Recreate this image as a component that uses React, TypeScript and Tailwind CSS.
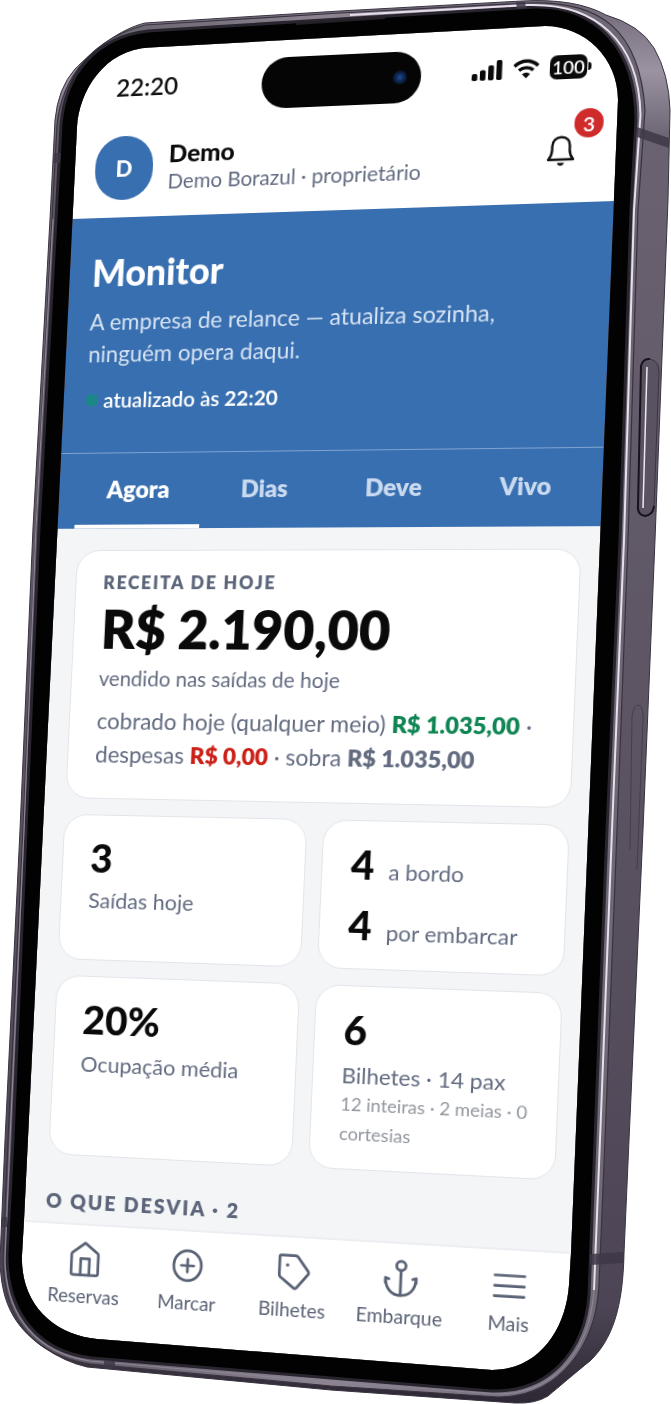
import type { ReactNode } from "react";

// Local size of the app screen, and the two rows that are pinned to the device
const SCREEN_W = 544;
const HEADER_BOTTOM = 172;
const NAV_TOP = 1198;

type Point = [number, number];

// top-left, top-right, bottom-right, bottom-left on the device
const CORNERS: Point[] = [[72, 219], [615, 201], [571, 1252], [24, 1220]];

// Projects the flat screen onto the tilted glass
function project([p0, p1, p2, p3]: Point[]) {
    const dx1 = p1[0] - p2[0], dx2 = p3[0] - p2[0], dx3 = p0[0] - p1[0] + p2[0] - p3[0];
    const dy1 = p1[1] - p2[1], dy2 = p3[1] - p2[1], dy3 = p0[1] - p1[1] + p2[1] - p3[1];
    const det = dx1 * dy2 - dx2 * dy1;
    const g = (dx3 * dy2 - dx2 * dy3) / det;
    const h = (dx1 * dy3 - dx3 * dy1) / det;
    const s = NAV_TOP - HEADER_BOTTOM;
    const k = HEADER_BOTTOM / s;
    const a = p1[0] - p0[0] + g * p1[0], b = p3[0] - p0[0] + h * p3[0];
    const d = p1[1] - p0[1] + g * p1[1], e = p3[1] - p0[1] + h * p3[1];
    return `matrix3d(${[
        a / SCREEN_W, d / SCREEN_W, 0, g / SCREEN_W,
        b / s, e / s, 0, h / s,
        0, 0, 1, 0,
        p0[0] - b * k, p0[1] - e * k, 0, 1 - h * k,
    ].join(",")})`;
}

/* ---------- Icons ---------- */

function NavIcon({ children }: { children: ReactNode }) {
    return (
        <svg viewBox="0 0 32 36" className="w-[34px] h-[38px]" fill="none" stroke="currentColor" strokeWidth="2.600"
            strokeLinecap="round" strokeLinejoin="round" aria-hidden="true">
            {children}
        </svg>
    );
}

const NAV = [
    {
        label: "Reservas",
        icon: <><path d="M3 31V13.500Q3 12.500 4 11.800L16 2.500 28 11.800Q29 12.500 29 13.500V31Q29 33 27 33H5Q3 33 3 31Z" /><path d="M12 33V17.500H20.500V33" /></>,
    },
    {
        label: "Marcar",
        icon: <><ellipse cx="16" cy="18" rx="13.200" ry="14" /><path d="M16 12V24M10 18H22" /></>,
    },
    {
        label: "Bilhetes",
        icon: <><path d="M3 4Q3 2.500 4.500 2.500H17.500Q19 2.500 20 3.500L30 16.500Q31 18 30 19.500L19.500 32.500Q18 34 16.500 32.500L4 23Q3 22 3 20.500Z" /><circle cx="10.500" cy="11.500" r="1" fill="currentColor" strokeWidth="1.200" /></>,
    },
    {
        label: "Embarque",
        icon: <><circle cx="16" cy="6" r="4.300" /><path d="M16 10.500V33.500M5 18.500 1.800 17.500 1.800 22M27 18 30.200 17 30.200 21.500M2 18.500C2 28 8.500 33.500 16 33.500S30 28 30 18" /></>,
    },
    { label: "Mais", icon: <path d="M2.500 9H29.500M2.500 18.500H29.500M2.500 28H29.500" /> },
];

function Bell() {
    return (
        <svg viewBox="0 0 28 32" className="w-7 h-8" fill="none" stroke="#111" strokeWidth="2.400" strokeLinejoin="round" aria-hidden="true">
            <path d="M2 24C4.500 21 5.500 18.500 5.500 14.500V10.500C5.500 5 9 1.800 14 1.800S22.500 5 22.500 10.500V14.500C22.500 18.500 23.500 21 26 24Z" />
            <path d="M11.500 28Q14 31 16.500 28Z" fill="#111" strokeWidth="1.600" />
        </svg>
    );
}

function StatusIcons() {
    return (
        <div className="flex items-center gap-2.5">
            <svg viewBox="0 0 30 20" className="w-[30px] h-5" fill="#0a0a0a" aria-hidden="true">
                <rect x="0" y="13" width="5.500" height="7" rx="1.800" />
                <rect x="8" y="9.500" width="5.500" height="10.500" rx="1.800" />
                <rect x="16" y="5" width="5.500" height="15" rx="1.800" />
                <rect x="24" y="0" width="5.500" height="20" rx="1.800" />
            </svg>
            <svg viewBox="0 0 26 20" className="w-[26px] h-5" fill="none" stroke="#0a0a0a" strokeWidth="3.400" aria-hidden="true">
                <path d="M1.500 7.200C8 .5 18 .5 24.500 7.200" />
                <path d="M6 11.600C10 8 16 8 20 11.600" />
                <path d="M9 15.300Q13 12 17 15.300L13 19.500Z" fill="#0a0a0a" stroke="none" />
            </svg>
            <div className="flex items-center gap-px">
                <span className="flex items-center justify-center w-9 h-6 rounded-[7px] bg-[#0a0a0a] text-white text-lg leading-5 font-semibold">100</span>
                <span className="w-[3px] h-2 rounded-r-full bg-[#0a0a0a]" />
            </div>
        </div>
    );
}

/* ---------- Screen ---------- */

function Header() {
    return (
        <header className="h-[172px] bg-white">
            <div className="grid grid-cols-[151fr_160px_167fr] items-center pt-2 pl-10 pr-7">
                <span className="text-[25px] leading-8 font-semibold text-[#111]">22:20</span>
                <div className="mt-1.5 flex items-center justify-end h-[52px] pr-3.5 rounded-full bg-[#050506]">
                    <span className="w-3.5 h-3.5 rounded-full bg-radial from-[#1d4f9a] via-[#0c2144] to-[#05070d]" />
                </div>
                <div className="flex justify-end"><StatusIcons /></div>
            </div>
            <div className="flex items-center pt-[22px] pl-[22px] pr-10">
                <div className="flex items-center justify-center w-[60px] h-[66px] rounded-full bg-[#386fb0] text-white text-[23px] font-black">D</div>
                <div className="ml-4 flex-1">
                    <p className="text-[25px] leading-[30px] font-black text-[#0c0c0e]">Demo</p>
                    <p className="text-[21px] leading-7 text-[#626b80]">Demo Borazul · proprietário</p>
                </div>
                <button type="button" aria-label="Notificações" className="relative">
                    <Bell />
                    <span className="absolute left-[26px] -top-[26px] flex items-center justify-center w-7 h-[29px] rounded-full bg-[#d02b2b] text-white text-xl leading-6 font-semibold">3</span>
                </button>
            </div>
        </header>
    );
}

function Hero() {
    return (
        <section className="bg-[#386fb0] text-white">
            <div className="px-6 pt-[35px] pb-[42px]">
                <h1 className="text-[37px] leading-[44px] font-black">Monitor</h1>
                <p className="mt-3 text-[23px] leading-[33px] text-[#d5e2f3]">
                    A empresa de relance — atualiza sozinha,<br />ninguém opera daqui.
                </p>
                <p className="mt-[19px] flex items-center gap-1.5 text-[21px] leading-6 font-semibold">
                    <span className="w-3 h-3 rounded-sm bg-[#1c8788]" />
                    <span>atualizado às <b className="font-bold">22:20</b></span>
                </p>
            </div>
            <div role="tablist" className="grid grid-cols-4 h-[78px] pl-[18px] pr-2.5 border-t border-[#7fa3d1]">
                {["Agora", "Dias", "Deve", "Vivo"].map((tab, i) => (
                    <button key={tab} type="button" role="tab" aria-selected={i === 0}
                        className={`text-2xl font-extrabold border-b-4 ${i === 0 ? "border-white text-white" : "border-transparent text-[#c9daf0]"}`}>
                        {tab}
                    </button>
                ))}
            </div>
        </section>
    );
}

function Card({ children }: { children: ReactNode }) {
    return (
        <div className="px-7 py-5 rounded-3xl border border-[#e2e5e9] bg-white text-[22px] leading-7 text-[#626b80]">
            {children}
        </div>
    );
}

function Big({ children }: { children: ReactNode }) {
    return <p className="text-[40px] leading-[46px] font-black text-[#0a0a0b]">{children}</p>;
}

function Main() {
    return (
        <main className="h-[706px] pt-[22px] pl-[22px] pr-[18px] bg-[#f3f5f7]">
            <Card>
                <h2 className="text-lg leading-6 font-extrabold tracking-widest text-[#5c657a]">RECEITA DE HOJE</h2>
                <p className="mt-1.5 text-[54px] leading-[60px] font-extrabold text-[#0a0a0b]">R$ 2.190,00</p>
                <p className="mt-1.5 text-[21px] leading-7">vendido nas saídas de hoje</p>
                <p className="mt-3 pb-2 text-[23px] leading-[34px]">
                    cobrado hoje (qualquer meio) <b className="font-extrabold text-[#0f8554]">R$ 1.035,00</b> ·<br />
                    despesas <b className="font-extrabold text-[#cb2118]">R$ 0,00</b> · sobra <b className="font-extrabold">R$ 1.035,00</b>
                </p>
            </Card>

            <div className="mt-4 grid grid-cols-[251fr_237fr] gap-4">
                <Card>
                    <Big>3</Big>
                    <p className="mt-1.5">Saídas hoje</p>
                </Card>
                <Card>
                    <div className="flex items-baseline gap-3.5"><Big>4</Big><span>a bordo</span></div>
                    <div className="mt-3.5 flex items-baseline gap-3.5"><Big>4</Big><span>por embarcar</span></div>
                </Card>
                <Card>
                    <Big>20%</Big>
                    <p className="mt-2">Ocupação média</p>
                </Card>
                <Card>
                    <Big>6</Big>
                    <p className="mt-2">Bilhetes · 14 pax</p>
                    <p className="text-lg leading-[29px] whitespace-nowrap text-[#92969e]">12 inteiras · 2 meias · 0<br />cortesias</p>
                </Card>
            </div>

            <h2 className="mt-8 text-xl leading-7 font-extrabold tracking-widest text-[#5c657a]">O QUE DESVIA · 2</h2>
        </main>
    );
}

function BottomNav() {
    return (
        <nav className="h-[132px] grid grid-cols-5 pl-3 pr-1 pt-[15px] border-t-2 border-[#eceef1] bg-white">
            {NAV.map(item => (
                <a key={item.label} href="#" className="flex flex-col items-center gap-1.5 text-[19px] leading-6 text-[#5a6275]">
                    <NavIcon>{item.icon}</NavIcon>
                    <span>{item.label}</span>
                </a>
            ))}
        </nav>
    );
}

/* ---------- Device ---------- */

const HOLE = "M77 127C79 92 104 49 150 47.500L545 26C585 26 618 58 618 100L571 1253L569 1285C566 1328 540 1370 492 1370L97 1339C55 1335 20 1305 22 1255L24 1220Z";
const BODY = "M145 23L340 11L522 1Q575 -2 606 15Q640 25 654 48Q669 74 670 110L668 200L655 540L643 830L629 1140L624 1253C623 1308 612 1340 590 1361C575 1373 560 1386 548 1396Q535 1404 515 1403L331 1390L87 1367Q65 1362 43 1347C12 1325 1 1300 0 1260L5 1140L20 830L33 528L50 219L55 120Q58 88 75 69C95 49 120 29 145 23Z";
const RIM = "M145 25L340 13L528 3C600 0 640 30 645 110L638 210L628 540L617 830L605 1140L599 1285C596 1345 560 1397 498 1397L331 1386L90 1364C40 1356 3 1325 3 1258L8 1140L23 830L36 528L52 219L57 125C62 75 95 38 145 25Z";
const GLASS = "M148 31L340 19L535 7C597 6 636 50 636 120L631 210L620 540L607 830L595 1140L589 1295C585 1350 550 1393 491 1391L331 1378L92 1358C40 1352 7 1315 7 1255L13 1140L26 830L39 528L56 219L61 125C65 75 95 37 148 31Z";

function DeviceFrame() {
    return (
        <svg viewBox="0 0 671 1404" className="absolute inset-0 w-full h-full pointer-events-none" fillRule="evenodd" aria-hidden="true">
            <defs>
                <linearGradient id="side" x1="0" y1="0" x2="0" y2="1">
                    <stop offset="0" stopColor="#6f6776" />
                    <stop offset=".05" stopColor="#9b92a2" />
                    <stop offset=".1" stopColor="#6b6271" />
                    <stop offset=".5" stopColor="#5e5564" />
                    <stop offset=".93" stopColor="#4d4555" />
                    <stop offset="1" stopColor="#2d2833" />
                </linearGradient>
                <linearGradient id="rim" x1="0" y1="0" x2="1" y2="0">
                    <stop offset="0" stopColor="#55505b" />
                    <stop offset=".5" stopColor="#8c8591" />
                    <stop offset="1" stopColor="#6b6471" />
                </linearGradient>
            </defs>
            <path d={BODY + HOLE} fill="url(#side)" />
            <path d={BODY} fill="none" stroke="#3a3441" strokeWidth="1" />
            <path d={RIM + HOLE} fill="url(#rim)" />
            <path d={RIM} fill="none" stroke="#39333f" strokeWidth="1.200" />
            <path d={GLASS + HOLE} fill="#020203" />
            <path d={GLASS} fill="none" stroke="#29252e" strokeWidth="3" />
            <path d="M350 15L528 5C595 3 639 40 640.500 115L634 210L624 540L612 830L600 1140L594 1290" fill="none" stroke="#e6deea" strokeWidth="2" />
            <path d="M594 1290C590 1350 555 1394 498 1394L331 1382L90 1361C38 1353 5 1318 5 1258L10 1140L24 830L36 528L53 219" fill="none" stroke="#8d8495" strokeWidth="1.200" />

            {/* Antenna bands */}
            <path d="M516 2H525L526 8L517 9Z M637 127L669 138V148L637 137Z M590 1254L624 1252V1263L590 1265Z M54 153H61L60 163H53Z M2 1217H7V1227H1Z M104 1360L115 1361V1369L104 1368Z" fill="#3e3746" opacity=".85" />
            {/* Earpiece */}
            <path d="M296 24L385 18" stroke="#242026" strokeWidth="2" />

            {/* Side buttons */}
            <path d="M641 366Q643 358 650 359Q659 361 659 372L654 506Q653 515 645 516Q637 515 638 505Z" fill="#5b5261" />
            <path d="M654 506Q653 515 645 516Q637 515 638 505L641 366Q643 358 650 359" fill="none" stroke="#17131b" strokeWidth="2" />
            <path d="M650 359Q659 361 659 372L654 506" fill="none" stroke="#3b3341" strokeWidth="1" />
            <path d="M647 367L643 508" stroke="#eee6f1" strokeWidth="1.500" />
            <path d="M630 850L632 716Q634 704 639 705Q644 707 643 722L637 870" fill="none" stroke="#463e4c" strokeWidth="1" />
        </svg>
    );
}

export default function App() {
    return (
        <div className="flex justify-center bg-white font-['Lato',sans-serif]">
            <div className="relative shrink-0 w-[671px] h-[1404px] overflow-hidden">
                <div className="w-[544px] origin-top-left overflow-hidden rounded-[64px] bg-white" style={{ transform: project(CORNERS) }}>
                    <Header />
                    <Hero />
                    <Main />
                    <BottomNav />
                </div>
                <DeviceFrame />
            </div>
        </div>
    );
}
